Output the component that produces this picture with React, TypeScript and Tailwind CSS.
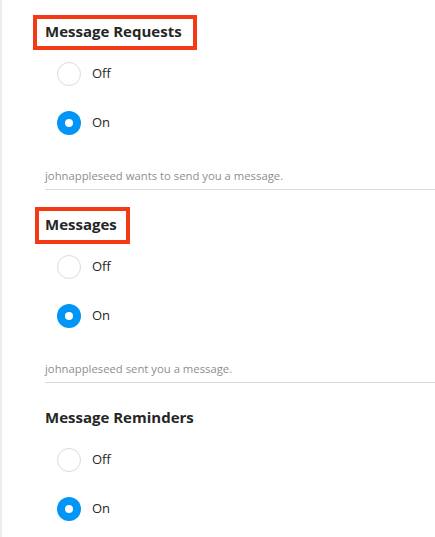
import React from "react";

type Section = {
  title: string;
  desc?: string;
  value: "off" | "on";
  box?: string;
};

const sections: Section[] = [
  {
    title: "Message Requests",
    desc: "johnappleseed wants to send you a message.",
    value: "on",
    box: "-left-[12px] -top-[6px] -right-[15px] -bottom-[9px]",
  },
  {
    title: "Messages",
    desc: "johnappleseed sent you a message.",
    value: "on",
    box: "-left-[10px] -top-[7px] -right-[13px] -bottom-[10px]",
  },
  {
    title: "Message Reminders",
    value: "on",
  },
];

const Radio = ({ checked, label }: { checked: boolean; label: string }) => {
  return (
    <label className="flex items-center h-[49px] pl-[12px] cursor-pointer">
      {checked ? (
        <span className="w-[24px] h-[24px] rounded-full bg-[#0095f6] flex items-center justify-center">
          <span className="w-[8px] h-[8px] rounded-full bg-white" />
        </span>
      ) : (
        <span className="w-[24px] h-[24px] rounded-full border-[1.5px] border-[#dbdbdb] bg-white" />
      )}
      <span className="ml-[11px] text-[13px] text-[#262626]">{label}</span>
    </label>
  );
};

const App = () => {
  return (
    <div
      className="min-h-[537px] bg-white border-l-2 border-[#ececec] pl-[43px] pt-[19px]"
      style={{ fontFamily: '"Open Sans", "Noto Sans", sans-serif' }}
    >
      {sections.map((s) => (
        <div key={s.title}>
          <div className="h-[20px]">
            <h2 className="relative inline-block text-[15px] leading-[20px] font-bold text-[#262626]">
              {s.title}
              {s.box && (
                <span
                  className={`absolute ${s.box} border-[4px] border-[#f43a14] pointer-events-none`}
                />
              )}
            </h2>
          </div>
          <div className="mt-[10px]">
            <Radio checked={s.value === "off"} label="Off" />
            <Radio checked={s.value === "on"} label="On" />
          </div>
          {s.desc && (
            <div className="mt-[21px] pb-[5px] border-b border-[#dbdbdb] mb-[22px]">
              <p className="text-[11.3px] leading-[16px] text-[#8e8e8e]">{s.desc}</p>
            </div>
          )}
        </div>
      ))}
    </div>
  );
};

export default App;
